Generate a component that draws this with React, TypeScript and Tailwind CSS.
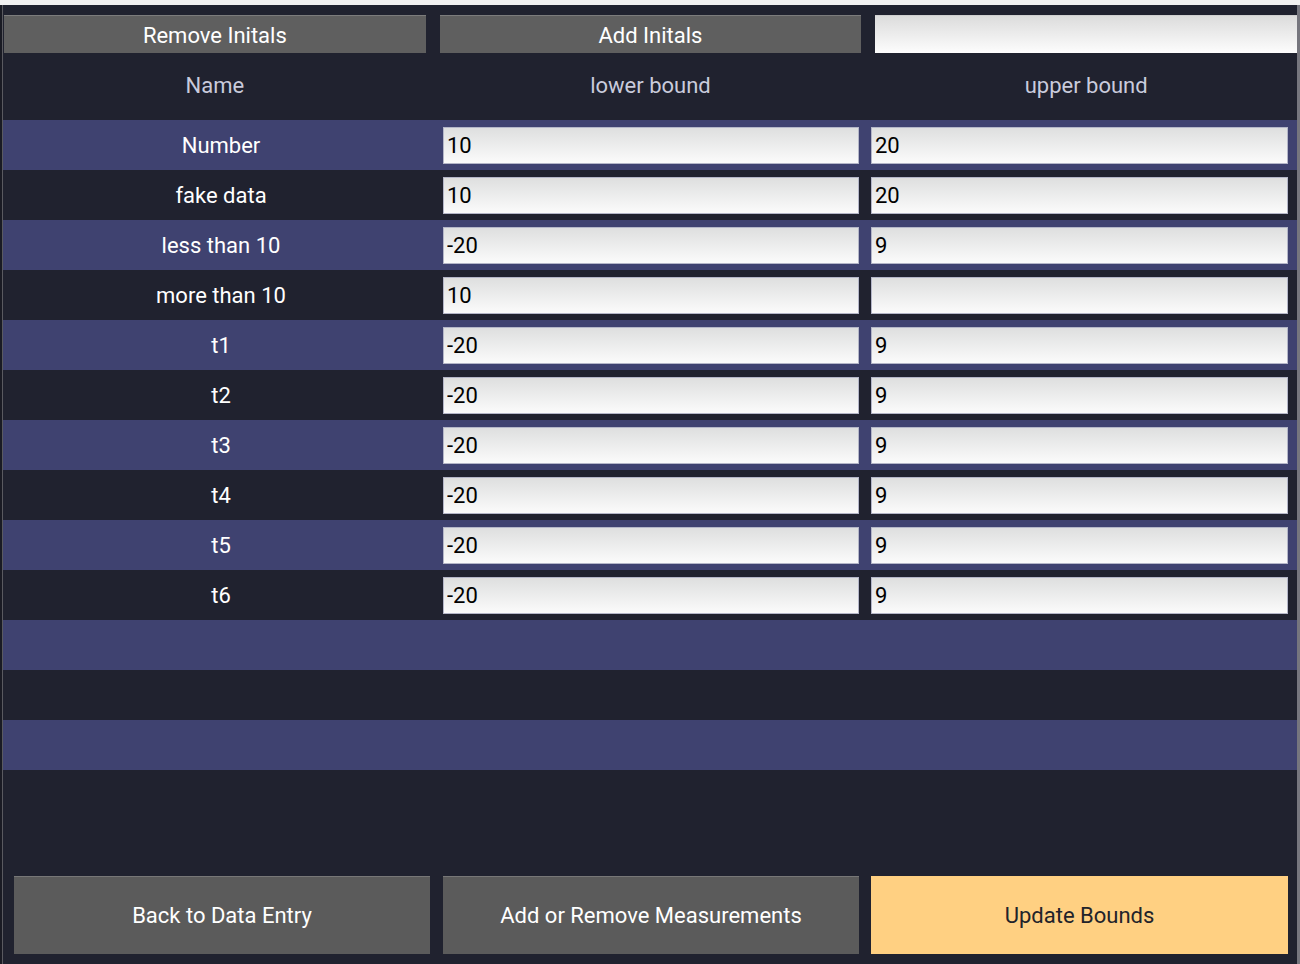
import React from "react";

type Row = { name: string; lower: string; upper: string };

const rows: Row[] = [
  { name: "Number", lower: "10", upper: "20" },
  { name: "fake data", lower: "10", upper: "20" },
  { name: "less than 10", lower: "-20", upper: "9" },
  { name: "more than 10", lower: "10", upper: "" },
  { name: "t1", lower: "-20", upper: "9" },
  { name: "t2", lower: "-20", upper: "9" },
  { name: "t3", lower: "-20", upper: "9" },
  { name: "t4", lower: "-20", upper: "9" },
  { name: "t5", lower: "-20", upper: "9" },
  { name: "t6", lower: "-20", upper: "9" },
];

const inputCls =
  "h-[37px] border border-[#b4b6c8] bg-gradient-to-b from-[#dedfdf] to-[#fbfbfb] px-[3px] text-[22px] leading-none text-black outline-none";

export default function App() {
  return (
    <div
      className="flex h-[964px] w-[1300px] flex-col overflow-hidden bg-[#20222f]"
      style={{ fontFamily: "Roboto, 'Noto Sans', sans-serif" }}
    >
      <div className="h-[5px] shrink-0 bg-[#f1f1f1]" />
      <div className="flex flex-1">
        <div className="w-[3px] shrink-0 border-l-[2px] border-[#1a1b24] bg-[#5a5a60]" />
        <div className="flex flex-1 flex-col">
          {/* top controls */}
          <div className="grid grid-cols-3 gap-[14px] pl-[1px] pt-[10px]">
            <button className="h-[38px] border-t border-[#7c7c7c] bg-[#5f5f5f] pt-[2px] text-[22px] text-white">
              Remove Initals
            </button>
            <button className="h-[38px] border-t border-[#7c7c7c] bg-[#5f5f5f] pt-[2px] text-[22px] text-white">
              Add Initals
            </button>
            <input className="h-[38px] border-t border-[#d0d0d0] bg-gradient-to-b from-[#dcdcdc] to-[#fdfdfd] outline-none" />
          </div>

          {/* header */}
          <div className="grid h-[67px] grid-cols-3 items-center gap-[14px] pb-[3px] pl-[1px] text-[22px] text-[#c9cbdc]">
            <div className="text-center">Name</div>
            <div className="text-center">lower bound</div>
            <div className="text-center">upper bound</div>
          </div>

          {/* rows */}
          <div className="flex flex-col">
            {rows.map((r, i) => (
              <div
                key={r.name}
                className={
                  "flex h-[50px] items-center " +
                  (i % 2 === 0 ? "bg-[#3f4270]" : "bg-[#20222f]")
                }
              >
                <div className="w-[436px] shrink-0 text-center text-[22px] text-white">
                  {r.name}
                </div>
                <input
                  className={inputCls + " ml-[4px] w-[416px]"}
                  defaultValue={r.lower}
                />
                <input
                  className={inputCls + " ml-[12px] w-[417px]"}
                  defaultValue={r.upper}
                />
              </div>
            ))}
            <div className="h-[50px] bg-[#3f4270]" />
            <div className="h-[50px] bg-[#20222f]" />
            <div className="h-[50px] bg-[#3f4270]" />
          </div>

          {/* bottom buttons */}
          <div className="mt-auto flex gap-[13px] pb-[10px] pl-[11px]">
            <button className="h-[78px] w-[416px] border-t border-[#777777] bg-[#5b5b5b] text-[22px] text-white">
              Back to Data Entry
            </button>
            <button className="h-[78px] w-[416px] border-t border-[#777777] bg-[#5b5b5b] text-[22px] text-white">
              Add or Remove Measurements
            </button>
            <button className="ml-[-1px] h-[78px] w-[417px] bg-[#ffd082] text-[22px] text-[#22232a]">
              Update Bounds
            </button>
          </div>
        </div>
        <div className="w-[3px] shrink-0 bg-[#76767e]" />
      </div>
    </div>
  );
}
